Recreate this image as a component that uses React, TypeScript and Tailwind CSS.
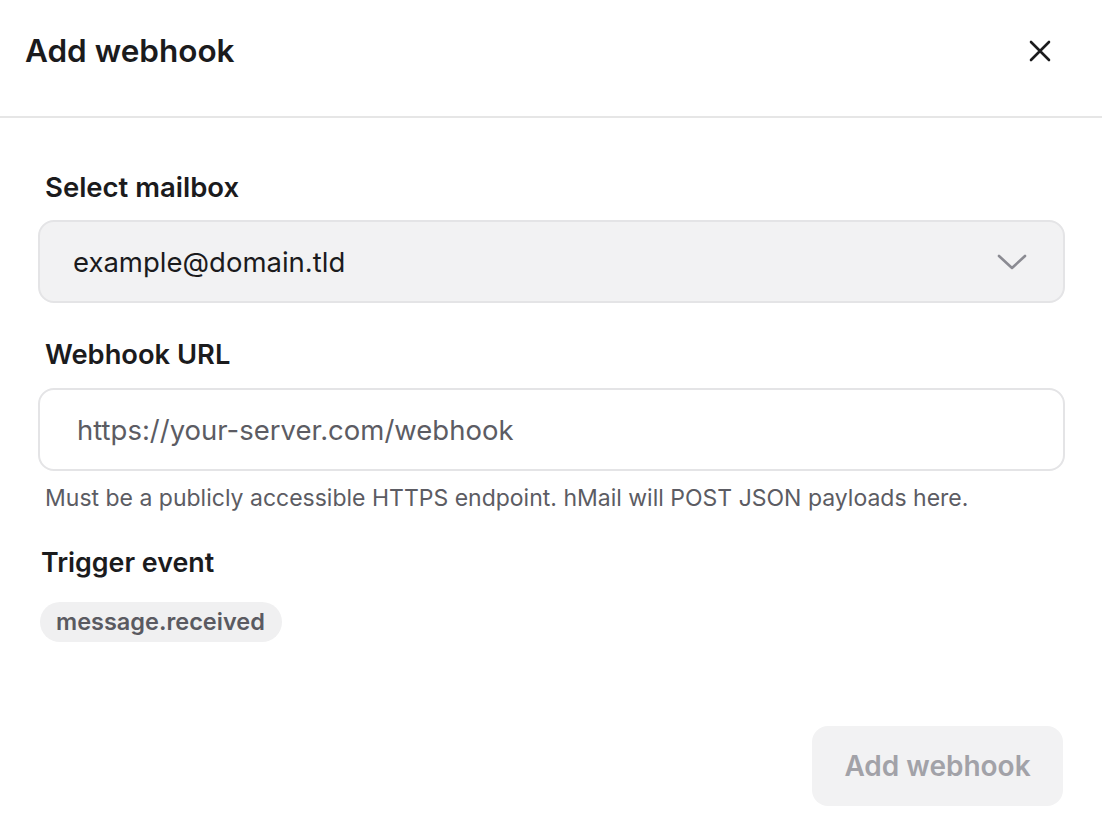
import React from "react";

export default function App() {
  return (
    <div
      className="w-[1102px] h-[826px] bg-white text-[#1b1b1d] overflow-hidden"
      style={{ fontFamily: "Inter, 'Noto Sans', sans-serif" }}
    >
      <div className="h-[118px] border-b-2 border-[#e6e6e6] flex items-center justify-between pl-[25px] pr-[50px] pb-[14px]">
        <h1 className="text-[31.5px] font-semibold leading-[40px]">Add webhook</h1>
        <svg width="24" height="24" viewBox="0 0 24 24" fill="none" stroke="#1b1b1d" strokeWidth="2.6" strokeLinecap="round">
          <path d="M3 3L21 21M21 3L3 21" />
        </svg>
      </div>

      <div className="pl-[38px] pr-[37px] pt-[54px]">
        <label className="block pl-[7px] text-[27.5px] font-semibold leading-[30px]">Select mailbox</label>
        <div className="mt-[18px] h-[83px] rounded-[16px] border-2 border-[#e4e4e6] bg-[#f2f2f3] flex items-center justify-between pl-[33px] pr-[36px]">
          <span className="text-[27.5px] leading-[34px]">example@domain.tld</span>
          <svg width="30" height="18" viewBox="0 0 30 18" fill="none" stroke="#8b8b92" strokeWidth="2.6" strokeLinecap="round" strokeLinejoin="round">
            <path d="M2 3L15 15L28 3" />
          </svg>
        </div>

        <label className="block mt-[37px] pl-[7px] text-[27.3px] font-semibold leading-[30px]">Webhook URL</label>
        <div className="mt-[18px] h-[83px] rounded-[16px] border-2 border-[#e4e4e6] bg-white flex items-center pl-[37px]">
          <span className="text-[27.5px] leading-[34px] text-[#5c5c63]">https://your-server.com/webhook</span>
        </div>
        <p className="mt-[12px] pl-[7px] text-[23px] text-[#5c5c63] leading-[30px]">
          Must be a publicly accessible HTTPS endpoint. hMail will POST JSON payloads here.
        </p>

        <label className="block mt-[33px] pl-[3px] text-[26.8px] font-semibold leading-[32px]">Trigger event</label>
        <div className="mt-[24px] pl-[2px]">
          <span className="inline-flex items-center h-[40px] pl-[16px] pr-[17px] rounded-full bg-[#f0f0f1] text-[23.5px] font-semibold text-[#5a5a61] leading-[30px]">
            message.received
          </span>
        </div>

        <div className="mt-[84px] flex justify-end pr-[2px]">
          <button className="h-[80px] w-[251px] rounded-[16px] bg-[#f2f2f3] text-[28px] font-semibold text-[#a2a2a8] leading-[34px]">
            Add webhook
          </button>
        </div>
      </div>
    </div>
  );
}
